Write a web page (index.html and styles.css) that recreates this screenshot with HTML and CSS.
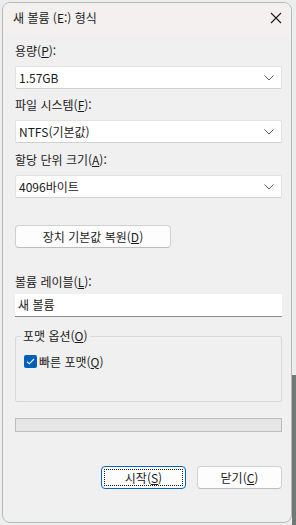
FILE: index.html
```html
<!DOCTYPE html>
<html lang="ko">
<head>
    <meta charset="UTF-8">
    <meta name="viewport" content="width=device-width, initial-scale=1.0">
    <title>새 볼륨 (E:) 형식</title>
    <link rel="stylesheet" href="styles.css">
</head>
<body>
    <div class="desk">
        <div class="window">
            <div class="titlebar">
                <span class="title">새 볼륨 (E:) 형식</span>
                <svg class="close" width="12" height="12" viewBox="0 0 12 12">
                    <path d="M1 1L11 11M11 1L1 11" stroke="#1c1c1c" stroke-width="1.1" fill="none"/>
                </svg>
            </div>
            <div class="content">
                <label class="label first">용량(<u>P</u>):</label>
                <div class="combo">
                    <span>1.57GB</span>
                    <svg class="chev" width="10" height="6" viewBox="0 0 10 6"><path d="M0.5 0.5L5 5L9.5 0.5" stroke="#606060" fill="none"/></svg>
                </div>
                <label class="label">파일 시스템(<u>F</u>):</label>
                <div class="combo">
                    <span>NTFS(기본값)</span>
                    <svg class="chev" width="10" height="6" viewBox="0 0 10 6"><path d="M0.5 0.5L5 5L9.5 0.5" stroke="#606060" fill="none"/></svg>
                </div>
                <label class="label third">할당 단위 크기(<u>A</u>):</label>
                <div class="combo">
                    <span>4096바이트</span>
                    <svg class="chev" width="10" height="6" viewBox="0 0 10 6"><path d="M0.5 0.5L5 5L9.5 0.5" stroke="#606060" fill="none"/></svg>
                </div>
                <button class="btn restore">장치 기본값 복원(<u>D</u>)</button>
                <label class="label volume">볼륨 레이블(<u>L</u>):</label>
                <div class="textbox">새 볼륨</div>
                <fieldset class="group">
                    <legend>포맷 옵션(<u>O</u>)</legend>
                    <div class="check">
                        <span class="box">
                            <svg width="9" height="7" viewBox="0 0 9 7"><path d="M1 3.6L3.3 5.8L8 1" stroke="#fff" stroke-width="1.1" fill="none"/></svg>
                        </span>
                        <span>빠른 포맷(<u>Q</u>)</span>
                    </div>
                </fieldset>
                <div class="progress"></div>
                <div class="actions">
                    <button class="btn primary"><span class="focus">시작(<u>S</u>)</span></button>
                    <button class="btn">닫기(<u>C</u>)</button>
                </div>
            </div>
        </div>
        <div class="edge"></div>
    </div>
</body>
</html>
```
FILE: styles.css
```css
html, body {
    margin: 0;
    padding: 0;
}
body {
    width: 296px;
    height: 525px;
    overflow: hidden;
    background: #eceded;
    font-family: "Noto Sans CJK KR", "Noto Sans", sans-serif;
    font-size: 12px;
    color: #1a1a1a;
}
.desk {
    display: flex;
    height: 525px;
}
.window {
    width: 290px;
    height: 521px;
    margin: 2px 0 0 2px;
    box-sizing: border-box;
    background: #f0f0f0;
    border: 1px solid #b9b9b9;
    border-radius: 8px;
    overflow: hidden;
    display: flex;
    flex-direction: column;
}
.edge {
    flex: 1;
    margin-top: 375px;
    background: #6f7a76;
}
.titlebar {
    height: 31px;
    flex-shrink: 0;
    background: #f4f0ef;
    display: flex;
    align-items: center;
    justify-content: space-between;
    padding: 0 9px 0 10px;
}
.title {
    font-size: 12px;
    line-height: 16px;
    margin-top: -2px;
}
.close {
    margin-top: -2px;
}
.content {
    padding: 0 9px 0 12px;
    display: flex;
    flex-direction: column;
}
.label {
    display: block;
    line-height: 16px;
    margin-top: 8px;
    margin-bottom: 7px;
}
.label.first {
    margin-top: 9px;
}
.label.third {
    margin-top: 9px;
}
u {
    text-decoration: underline;
    text-underline-offset: 1px;
}
.combo {
    height: 23px;
    box-sizing: border-box;
    background: #ffffff;
    border: 1px solid #e2e2e2;
    border-bottom-color: #d0d0d0;
    border-radius: 2px;
    display: flex;
    align-items: center;
    justify-content: space-between;
    padding: 0 7px 0 3px;
}
.chev {
    margin-top: 1px;
}
.btn {
    font-family: inherit;
    font-size: 12px;
    color: #1a1a1a;
    height: 23px;
    box-sizing: border-box;
    background: #fdfdfd;
    border: 1px solid #d0d0d0;
    border-bottom-color: #bdbdbd;
    border-radius: 4px;
    padding: 0;
    cursor: pointer;
}
.restore {
    width: 156px;
    margin-top: 27px;
}
.label.volume {
    margin-top: 26px;
    margin-bottom: 4px;
}
.textbox {
    height: 23px;
    box-sizing: border-box;
    background: #ffffff;
    border-bottom: 1px solid #8a8a8a;
    padding: 0 3px;
    line-height: 22px;
}
.group {
    margin: 11px 0 0 0;
    padding: 0 0 0 5px;
    height: 74px;
    box-sizing: border-box;
    border: 1px solid #d9d9d9;
    border-radius: 2px;
}
.group legend {
    padding: 0 2px;
    margin-left: 0;
    line-height: 16px;
}
.check {
    display: flex;
    align-items: center;
    gap: 2px;
    margin-top: 9px;
    margin-left: 3px;
}
.box {
    width: 13px;
    height: 13px;
    box-sizing: border-box;
    background: #0060b8;
    border-radius: 2px;
    display: flex;
    align-items: center;
    justify-content: center;
}
.progress {
    height: 14px;
    box-sizing: border-box;
    margin-top: 16px;
    background: #e6e6e6;
    border: 1px solid #bcbcbc;
}
.actions {
    display: flex;
    justify-content: flex-end;
    gap: 11px;
    margin-top: 34px;
}
.actions .btn {
    width: 85px;
}
.btn.primary {
    border: 1px solid #0067c0;
    padding: 2px;
}
.focus {
    display: flex;
    align-items: center;
    justify-content: center;
    height: 100%;
    box-sizing: border-box;
    border: 1px dotted #1a1a1a;
}
```
